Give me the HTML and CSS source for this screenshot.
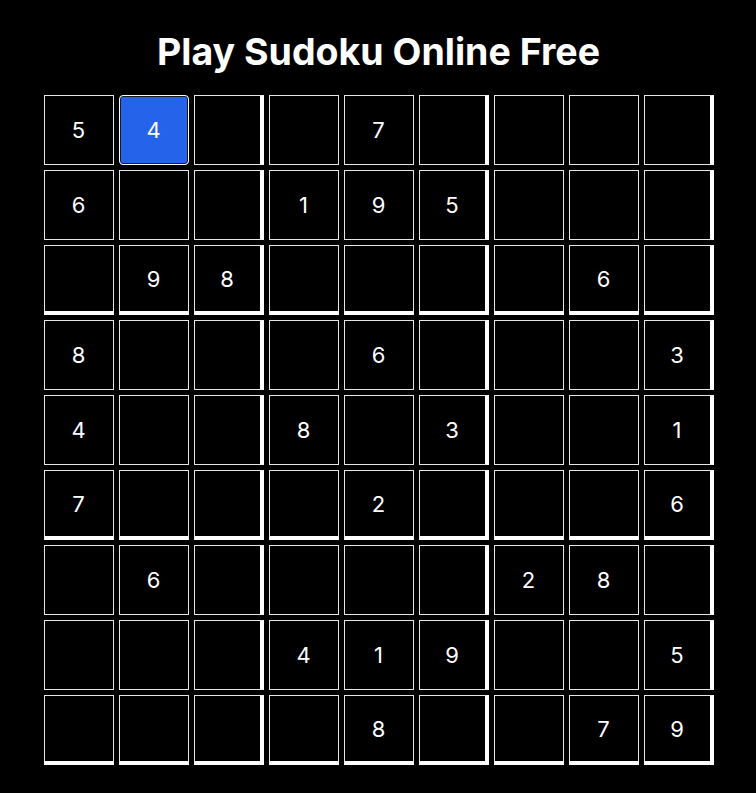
FILE: index.html
```html
<!DOCTYPE html>
<html lang="en">
<head>
<meta charset="utf-8">
<title>Play Sudoku Online Free</title>
<link rel="stylesheet" href="styles.css">
</head>
<body>
<main class="page">
  <h1 class="title">Play Sudoku Online Free</h1>
  <div class="board">
    <div class="cell">5</div><div class="cell selected">4</div><div class="cell br"></div><div class="cell"></div><div class="cell">7</div><div class="cell br"></div><div class="cell"></div><div class="cell"></div><div class="cell br"></div>
    <div class="cell">6</div><div class="cell"></div><div class="cell br"></div><div class="cell">1</div><div class="cell">9</div><div class="cell br">5</div><div class="cell"></div><div class="cell"></div><div class="cell br"></div>
    <div class="cell bb"></div><div class="cell bb">9</div><div class="cell bb br">8</div><div class="cell bb"></div><div class="cell bb"></div><div class="cell bb br"></div><div class="cell bb"></div><div class="cell bb">6</div><div class="cell bb br"></div>
    <div class="cell">8</div><div class="cell"></div><div class="cell br"></div><div class="cell"></div><div class="cell">6</div><div class="cell br"></div><div class="cell"></div><div class="cell"></div><div class="cell br">3</div>
    <div class="cell">4</div><div class="cell"></div><div class="cell br"></div><div class="cell">8</div><div class="cell"></div><div class="cell br">3</div><div class="cell"></div><div class="cell"></div><div class="cell br">1</div>
    <div class="cell bb">7</div><div class="cell bb"></div><div class="cell bb br"></div><div class="cell bb"></div><div class="cell bb">2</div><div class="cell bb br"></div><div class="cell bb"></div><div class="cell bb"></div><div class="cell bb br">6</div>
    <div class="cell"></div><div class="cell">6</div><div class="cell br"></div><div class="cell"></div><div class="cell"></div><div class="cell br"></div><div class="cell">2</div><div class="cell">8</div><div class="cell br"></div>
    <div class="cell"></div><div class="cell"></div><div class="cell br"></div><div class="cell">4</div><div class="cell">1</div><div class="cell br">9</div><div class="cell"></div><div class="cell"></div><div class="cell br">5</div>
    <div class="cell bb"></div><div class="cell bb"></div><div class="cell bb br"></div><div class="cell bb"></div><div class="cell bb">8</div><div class="cell bb br"></div><div class="cell bb"></div><div class="cell bb">7</div><div class="cell bb br">9</div>
  </div>
</main>
</body>
</html>
```

FILE: styles.css
```css
html, body {
  margin: 0;
  padding: 0;
  background: #000;
  color: #fff;
  font-family: Inter, "Liberation Sans", sans-serif;
}

.page {
  display: flex;
  flex-direction: column;
  align-items: center;
  padding: 29px 0 0 1px;
}

.title {
  margin: 0 0 21px 0;
  font-size: 37.5px;
  font-weight: 700;
  line-height: 45px;
}

.board {
  display: grid;
  grid-template-columns: repeat(9, 70px);
  grid-auto-rows: 70px;
  gap: 5px;
}

.cell {
  box-sizing: border-box;
  border: 1px solid #e6e6e6;
  background: #000;
  display: flex;
  align-items: center;
  justify-content: center;
  font-size: 22px;
  font-weight: 400;
  color: #fff;
}

.cell.br {
  border-right: 4px solid #fff;
}

.cell.bb {
  border-bottom: 4px solid #fff;
}

.cell.selected {
  background: #2563eb;
  border: 1px solid #fff;
  border-radius: 4px;
  box-shadow: inset 0 0 0 1px #1a1a1a;
}
```
